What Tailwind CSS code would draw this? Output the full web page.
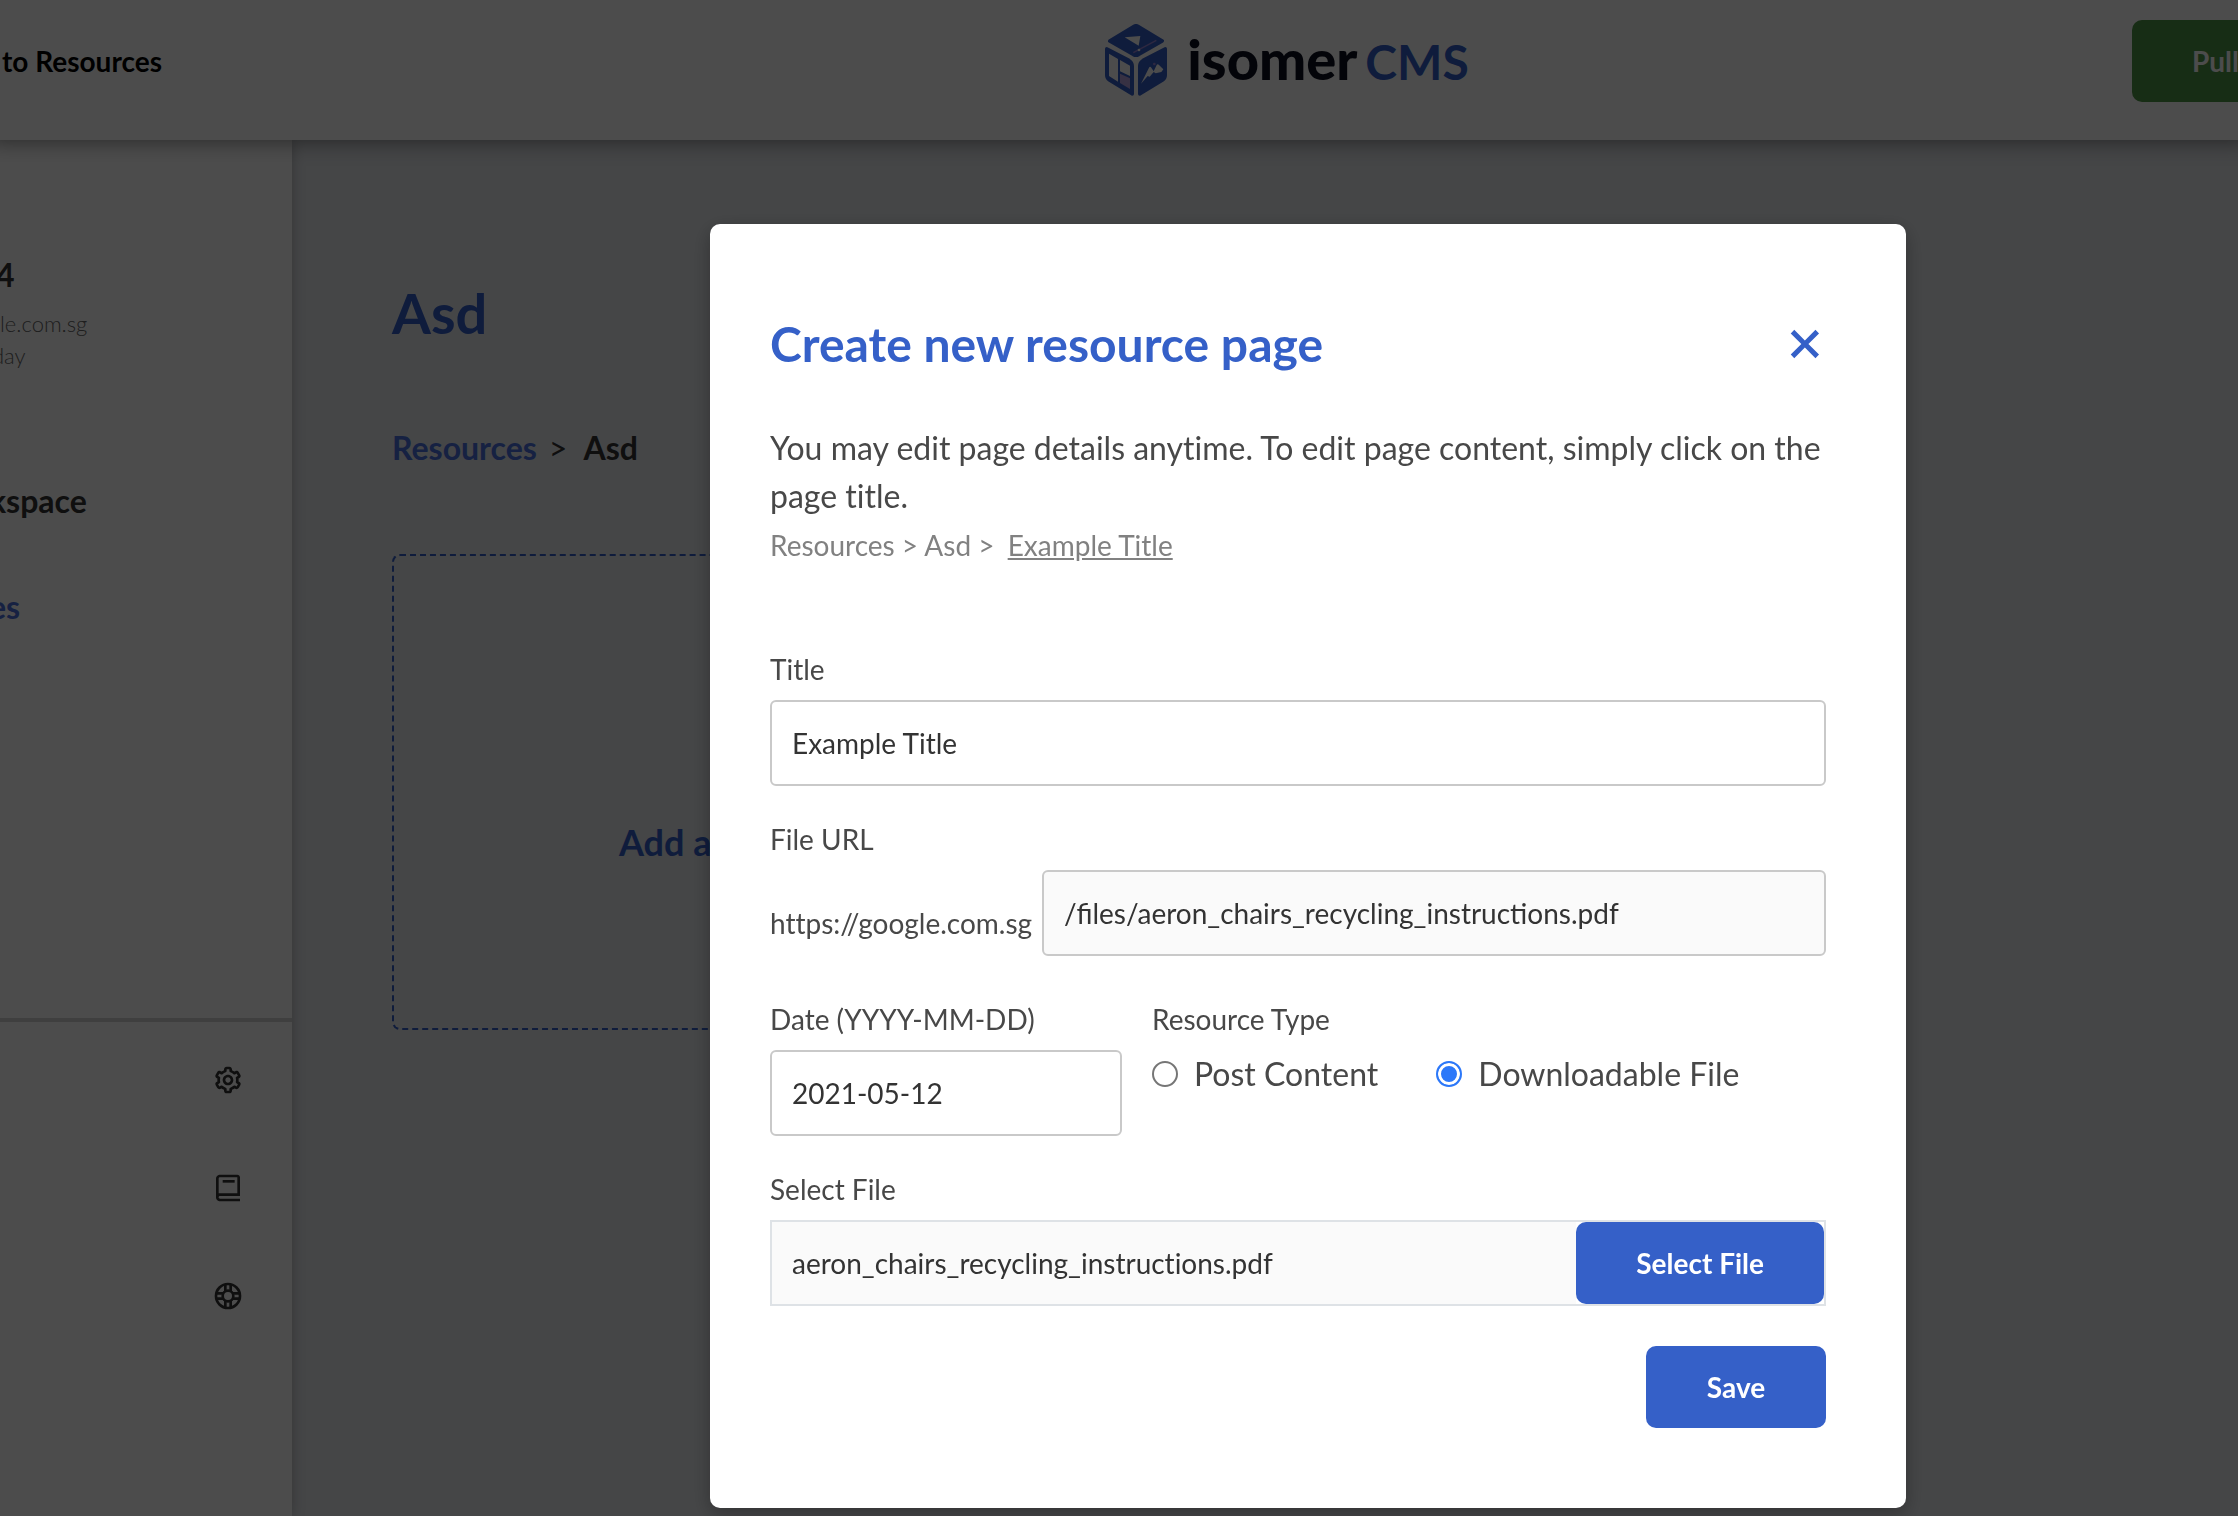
<!DOCTYPE html>
<html lang="en">
<head>
<meta charset="utf-8">
<title>isomerCMS</title>
<script src="https://cdn.jsdelivr.net/npm/@tailwindcss/browser@4"></script>
</head>
<body class="h-screen overflow-hidden bg-[#e6e9ed] font-['Lato',sans-serif] text-[#333] [font-variant-ligatures:none]">
<div class="flex h-full flex-col overflow-hidden">
  <header class="relative z-10 grid h-[140px] shrink-0 grid-cols-[5fr_auto_3fr_106px] items-start bg-white shadow-[0_-8px_20px_10px_rgba(0,0,0,0.45)]">
    <a href="#" class="pt-11 pl-0.5 text-[28px] leading-[34px] font-bold whitespace-nowrap text-black">to Resources</a>
    <div class="flex pt-6">
      <svg class="h-[72px] w-[62px]" viewBox="78 72 186 216" aria-hidden="true">
        <g fill="#3560c8" stroke="#3560c8" stroke-width="10" stroke-linejoin="round">
          <path d="M164 79q7-4 14 0l72 44-71 41q-8 4-16 0L92 123z"/>
          <path d="M83 146l67 35q10 6 10 17v84l-69-42q-8-5-8-14z"/>
          <path d="M259 146l-67 35q-10 6-10 17v84l69-42q8-5 8-14z"/>
        </g>
        <path fill="#fff" d="M137 112l47-4-5 29zM90 161l27 16v68l-27-17zM123 180l30 17v31l-30-14zM186 251l24-48q3-5 7 0l7 11 9-19q3-5 7 0l13 13-6 8-17 4-6-4-12 14-6-2z"/>
        <path fill="#b8a4e0" d="M123 221l30 14v32l-30-18z"/>
        <path stroke="#9c86d8" stroke-width="4" d="M163 158l69-37"/>
        <circle cx="180" cy="150" r="4" fill="#fff"/>
        <circle cx="226" cy="192" r="4" fill="#9c86d8"/>
      </svg>
      <div class="flex items-baseline gap-2 pl-5 leading-[70px]">
        <span class="text-[56px] font-black text-[#0d0f1f]">isomer</span>
        <span class="text-5xl leading-[70px] font-bold text-[#3560c8]">CMS</span>
      </div>
    </div>
    <button type="button" class="col-start-4 mt-5 h-[82px] w-max rounded-[10px] bg-[#4f9646] px-[60px] text-[28px] leading-[34px] font-bold text-white">Pull</button>
  </header>

  <div class="flex grow">
    <aside class="flex w-[292px] shrink-0 flex-col bg-white shadow-[0_0_12px_rgba(0,0,0,0.25)]">
      <div class="flex flex-col pt-[116px] pb-[392px]">
        <h2 class="-ml-1 text-[32px] leading-[38px] font-bold">4</h2>
        <div class="mt-3.5 text-[22px] leading-8 font-light text-[#666]">
          <p>le.com.sg</p>
          <p class="-ml-2">day</p>
        </div>
        <nav class="mt-[110px] -ml-[11px] flex flex-col gap-[68px] text-[32px] leading-[38px] font-bold">
          <a href="#">kspace</a>
          <a href="#" class="text-[#4a70dc]">es</a>
        </nav>
      </div>
      <div class="flex flex-col items-end gap-[76px] border-t-4 border-[#d2d2d2] pt-[42px] pr-12 text-[#333]">
        <a href="#" aria-label="Settings"><svg class="size-8" viewBox="0 0 24 24" fill="currentColor"><path d="M12 16c2.206 0 4-1.794 4-4s-1.794-4-4-4-4 1.794-4 4 1.794 4 4 4zm0-6c1.084 0 2 .916 2 2s-.916 2-2 2-2-.916-2-2 .916-2 2-2z"/><path d="m2.845 16.136 1 1.73c.531.917 1.809 1.261 2.73.73l.529-.306A8.1 8.1 0 0 0 9 19.402V20c0 1.103.897 2 2 2h2c1.103 0 2-.897 2-2v-.598a8.132 8.132 0 0 0 1.896-1.111l.529.306c.923.53 2.198.188 2.731-.731l.999-1.729a2.001 2.001 0 0 0-.731-2.732l-.505-.292a7.718 7.718 0 0 0 0-2.224l.505-.292a2.002 2.002 0 0 0 .731-2.732l-.999-1.729c-.531-.92-1.808-1.265-2.731-.732l-.529.306A8.1 8.1 0 0 0 15 4.598V4c0-1.103-.897-2-2-2h-2c-1.103 0-2 .897-2 2v.598a8.132 8.132 0 0 0-1.896 1.111l-.529-.306c-.924-.531-2.2-.187-2.731.732l-.999 1.729a2.001 2.001 0 0 0 .731 2.732l.505.292a7.683 7.683 0 0 0 0 2.223l-.505.292a2.003 2.003 0 0 0-.731 2.733zm3.326-2.758A5.703 5.703 0 0 1 6 12c0-.462.058-.926.17-1.378a.999.999 0 0 0-.47-1.108l-1.123-.65.998-1.729 1.145.662a.997.997 0 0 0 1.188-.142 6.071 6.071 0 0 1 2.384-1.399A1 1 0 0 0 11 5.3V4h2v1.3a1 1 0 0 0 .708.956 6.083 6.083 0 0 1 2.384 1.399.999.999 0 0 0 1.188.142l1.144-.661 1 1.729-1.124.649a1 1 0 0 0-.47 1.108c.112.452.17.916.17 1.378 0 .461-.058.925-.171 1.378a1 1 0 0 0 .471 1.108l1.123.649-.998 1.729-1.145-.661a.996.996 0 0 0-1.188.142 6.071 6.071 0 0 1-2.384 1.399A1 1 0 0 0 13 18.7l.002 1.3H11v-1.3a1 1 0 0 0-.708-.956 6.083 6.083 0 0 1-2.384-1.399.992.992 0 0 0-1.188-.141l-1.144.662-1-1.729 1.124-.651a1 1 0 0 0 .471-1.108z"/></svg></a>
        <a href="#" aria-label="Guide"><svg class="size-8" viewBox="0 0 24 24" fill="currentColor"><path d="M6 22h15v-2H6.012C5.55 19.988 5 19.805 5 19s.55-.988 1.012-1H21V4c0-1.103-.897-2-2-2H6c-1.206 0-3 .799-3 3v14c0 2.201 1.794 3 3 3zM5 8V5c0-.805.55-.988 1-1h13v12H5V8z"/><path d="M8 6h9v2H8z"/></svg></a>
        <a href="#" aria-label="Help"><svg class="size-8" viewBox="0 0 24 24" fill="none" stroke="currentColor" stroke-width="2"><circle cx="12" cy="12" r="9"/><circle cx="12" cy="12" r="4"/><path d="M10 3.2v5.4M14 3.2v5.4M10 15.4v5.4M14 15.4v5.4M3.2 10h5.4M3.2 14h5.4M15.4 10h5.4M15.4 14h5.4"/></svg></a>
      </div>
    </aside>

    <main class="grow px-[100px] pt-[139px]">
      <h1 class="text-[56px] leading-[68px] font-bold text-[#3560c8]">Asd</h1>
      <nav class="mt-[82px] flex text-[32px] leading-[38px]" aria-label="Breadcrumb">
        <a href="#" class="font-bold text-[#4a70dc]">Resources</a>
        <span class="px-3 pr-4">&gt;</span>
        <span class="font-bold">Asd</span>
      </nav>
      <button type="button" class="mt-[87px] flex h-[476px] w-[708px] items-center justify-center rounded-lg border-2 border-dashed border-[#3560c8] pt-[100px] text-4xl leading-[44px] font-bold text-[#3560c8]">Add a new page</button>
    </main>
  </div>
</div>

<div class="fixed inset-0 z-20 flex items-start justify-center bg-black/70 pt-[224px] pl-[378px]">
  <section role="dialog" aria-modal="true" aria-labelledby="dialog-title" class="w-[1196px] rounded-[10px] bg-white pt-[91px] pr-20 pb-20 pl-[60px] text-[28px] leading-[34px] text-[#484848] shadow-[0_6px_20px_rgba(0,0,0,0.28)]">
    <div class="flex items-center justify-between">
      <h2 id="dialog-title" class="text-5xl leading-[58px] font-bold text-[#3560c8]">Create new resource page</h2>
      <button type="button" aria-label="Close" class="mr-1.5 text-[#3560c8]"><svg class="size-[30px]" viewBox="6 6 12 12" fill="currentColor"><path d="m16.192 6.344-4.243 4.242-4.242-4.242-1.414 1.414L10.535 12l-4.242 4.242 1.414 1.414 4.242-4.242 4.243 4.242 1.414-1.414L13.364 12l4.242-4.242z"/></svg></button>
    </div>
    <p class="mt-[51px] text-[32px] leading-[48px]">You may edit page details anytime. To edit page content, simply click on the page title.</p>
    <p class="leading-[50px] text-[#818181]">Resources &gt; Asd &gt; <span class="pl-1.5"><span class="underline">Example Title</span></span></p>

    <form class="mt-[82px]">
      <label for="title" class="block">Title</label>
      <input id="title" type="text" value="Example Title" class="mt-3.5 block h-[86px] w-full rounded-md border-2 border-[#c9c9c9] px-5 text-[#333]">

      <label for="url" class="mt-9 block">File URL</label>
      <div class="mt-3.5 flex items-end gap-2.5">
        <span class="pb-4">https://google.com.sg</span>
        <input id="url" type="text" readonly value="/files/aeron_chairs_recycling_instructions.pdf" class="h-[86px] min-w-0 grow rounded-md border-2 border-[#c9c9c9] bg-[#fafafa] px-5 text-[#333] [font-variant-ligatures:normal]">
      </div>

      <div class="mt-[46px] grid grid-cols-[1fr_2fr]">
        <div>
          <label for="date" class="block">Date (YYYY-MM-DD)</label>
          <input id="date" type="text" value="2021-05-12" class="mt-3.5 block h-[86px] w-full rounded-md border-2 border-[#c9c9c9] px-5 text-[#333]">
        </div>
        <fieldset class="pl-[30px]">
          <legend>Resource Type</legend>
          <div class="mt-3.5 flex gap-[58px] text-[32px] leading-[48px]">
            <label class="flex items-center gap-4"><input type="radio" name="type" class="size-[26px] appearance-none rounded-full border-2 border-[#767676] checked:border-[#2c78f9] checked:bg-[#2c78f9] checked:shadow-[inset_0_0_0_3px_white]">Post Content</label>
            <label class="flex items-center gap-4"><input type="radio" name="type" checked class="size-[26px] appearance-none rounded-full border-2 border-[#767676] checked:border-[#2c78f9] checked:bg-[#2c78f9] checked:shadow-[inset_0_0_0_3px_white]">Downloadable File</label>
          </div>
        </fieldset>
      </div>

      <label for="file" class="mt-9 block">Select File</label>
      <div class="mt-3.5 flex h-[86px] border-2 border-[#dee2e6]">
        <input id="file" type="text" readonly value="aeron_chairs_recycling_instructions.pdf" class="min-w-0 grow bg-[#fafafa] px-5 text-[#333]">
        <button type="button" class="rounded-[10px] bg-[#3560c8] px-[60px] font-bold text-white">Select File</button>
      </div>
      <div class="mt-10 flex justify-end">
        <button type="submit" class="h-[82px] w-[180px] rounded-[10px] bg-[#3560c8] font-bold text-white">Save</button>
      </div>
    </form>
  </section>
</div>
</body>
</html>
